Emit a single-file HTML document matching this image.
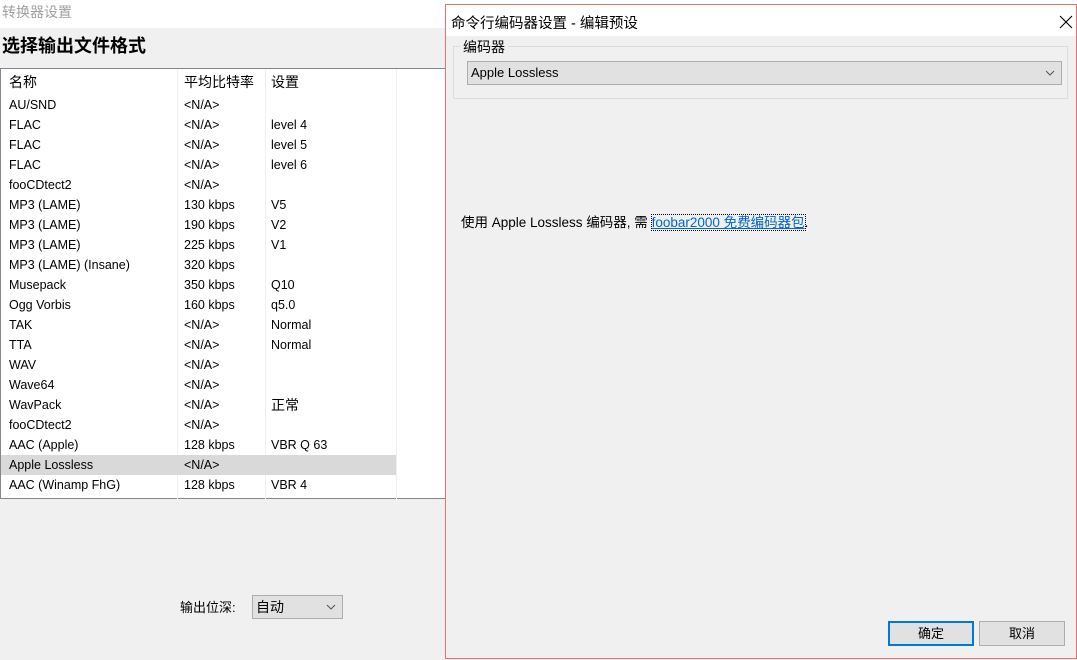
<!DOCTYPE html>
<html><head><meta charset="utf-8"><style>
*{margin:0;padding:0;box-sizing:border-box}
body{width:1077px;height:660px;overflow:hidden;background:#f0f0f0;font-family:"Liberation Sans","Noto Sans CJK SC",sans-serif;font-size:12.5px;color:#000;position:relative}
.abs{position:absolute}
.top{left:0;top:0;width:1077px;height:28px;background:#fff}
.list{left:0;top:68px;width:446px;height:431px;background:#fff;border:1px solid #828790;border-right:none}
.row{position:absolute;left:0;height:20px;width:395px;line-height:20px}
.row span{position:absolute}
.c1{left:8px}.c2{left:183px}.c3{left:270px}
.sel{background:#d9d9d9}
.dlg{left:445px;top:4px;width:632px;height:655px;background:#f0f0f0;border:1px solid #e57373}
.btn{position:absolute;height:25px;background:#e1e1e1;border:1px solid #adadad;text-align:center;line-height:23px;font-size:13px}
.chev{position:absolute;right:6px;top:8px}
</style></head><body>
<div class="abs top"></div>
<div class="abs" style="left:2px;top:2px;font-size:14px;color:#a0a0a0">转换器设置</div>
<div class="abs" style="left:2px;top:32px;font-size:18px;font-weight:bold">选择输出文件格式</div>
<div class="abs list">
 <div class="abs" style="left:176px;top:0;width:1px;height:430px;background:#f0f0f0"></div>
 <div class="abs" style="left:264px;top:0;width:1px;height:430px;background:#f0f0f0"></div>
 <div class="abs" style="left:395px;top:0;width:1px;height:430px;background:#f0f0f0"></div>
 <div class="row" style="top:2px;font-size:14px;line-height:22px"><span class="c1">名称</span><span class="c2">平均比特率</span><span class="c3">设置</span></div>
 <div class="row" style="top:26px"><span class="c1">AU/SND</span><span class="c2">&lt;N/A&gt;</span></div>
 <div class="row" style="top:46px"><span class="c1">FLAC</span><span class="c2">&lt;N/A&gt;</span><span class="c3">level 4</span></div>
 <div class="row" style="top:66px"><span class="c1">FLAC</span><span class="c2">&lt;N/A&gt;</span><span class="c3">level 5</span></div>
 <div class="row" style="top:86px"><span class="c1">FLAC</span><span class="c2">&lt;N/A&gt;</span><span class="c3">level 6</span></div>
 <div class="row" style="top:106px"><span class="c1">fooCDtect2</span><span class="c2">&lt;N/A&gt;</span></div>
 <div class="row" style="top:126px"><span class="c1">MP3 (LAME)</span><span class="c2">130 kbps</span><span class="c3">V5</span></div>
 <div class="row" style="top:146px"><span class="c1">MP3 (LAME)</span><span class="c2">190 kbps</span><span class="c3">V2</span></div>
 <div class="row" style="top:166px"><span class="c1">MP3 (LAME)</span><span class="c2">225 kbps</span><span class="c3">V1</span></div>
 <div class="row" style="top:186px"><span class="c1">MP3 (LAME) (Insane)</span><span class="c2">320 kbps</span></div>
 <div class="row" style="top:206px"><span class="c1">Musepack</span><span class="c2">350 kbps</span><span class="c3">Q10</span></div>
 <div class="row" style="top:226px"><span class="c1">Ogg Vorbis</span><span class="c2">160 kbps</span><span class="c3">q5.0</span></div>
 <div class="row" style="top:246px"><span class="c1">TAK</span><span class="c2">&lt;N/A&gt;</span><span class="c3">Normal</span></div>
 <div class="row" style="top:266px"><span class="c1">TTA</span><span class="c2">&lt;N/A&gt;</span><span class="c3">Normal</span></div>
 <div class="row" style="top:286px"><span class="c1">WAV</span><span class="c2">&lt;N/A&gt;</span></div>
 <div class="row" style="top:306px"><span class="c1">Wave64</span><span class="c2">&lt;N/A&gt;</span></div>
 <div class="row" style="top:326px"><span class="c1">WavPack</span><span class="c2">&lt;N/A&gt;</span><span class="c3" style="font-size:14px">正常</span></div>
 <div class="row" style="top:346px"><span class="c1">fooCDtect2</span><span class="c2">&lt;N/A&gt;</span></div>
 <div class="row" style="top:366px"><span class="c1">AAC (Apple)</span><span class="c2">128 kbps</span><span class="c3">VBR Q 63</span></div>
 <div class="row sel" style="top:386px"><span class="c1">Apple Lossless</span><span class="c2">&lt;N/A&gt;</span></div>
 <div class="row" style="top:406px"><span class="c1">AAC (Winamp FhG)</span><span class="c2">128 kbps</span><span class="c3">VBR 4</span></div>
</div>
<div class="abs" style="left:180px;top:597px;font-size:13px">输出位深:</div>
<div class="abs" style="left:252px;top:595px;width:91px;height:24px;background:#e1e1e1;border:1px solid #adadad;font-size:14px;line-height:22px;padding-left:3px">自动<svg class="chev" width="10" height="6"><path d="M1 1L5 5L9 1" stroke="#555" fill="none"/></svg></div>

<div class="abs dlg">
 <div class="abs" style="left:0;top:0;width:630px;height:31px;background:#fff"></div>
 <div class="abs" style="left:5px;top:7px;font-size:14.5px">命令行编码器设置 - 编辑预设</div>
 <svg class="abs" style="left:613px;top:10px" width="14" height="14"><path d="M1 1L13 13M13 1L1 13" stroke="#000" stroke-width="1.1"/></svg>
 <div class="abs" style="left:7px;top:41px;width:615px;height:53px;border:1px solid #dcdcdc"></div>
 <div class="abs" style="left:14px;top:32px;font-size:14px;background:#f0f0f0;padding:0 3px">编码器</div>
 <div class="abs" style="left:21px;top:56px;width:595px;height:24px;background:#e1e1e1;border:1px solid #adadad;font-size:13px;line-height:22px;padding-left:3px">Apple Lossless<svg class="chev" width="10" height="6"><path d="M1 1L5 5L9 1" stroke="#555" fill="none"/></svg></div>
 <div class="abs" style="left:15px;top:206px;font-size:13.5px;white-space:nowrap">使用 Apple Lossless 编码器, 需 <span style="color:#0066cc;text-decoration:underline;outline:1px dotted #000">foobar2000 免费编码器包</span>.</div>
 <div class="btn" style="left:442px;top:616px;width:86px;border:2px solid #0078d7;line-height:21px">确定</div>
 <div class="btn" style="left:533px;top:616px;width:86px">取消</div>
</div>
</body></html>
